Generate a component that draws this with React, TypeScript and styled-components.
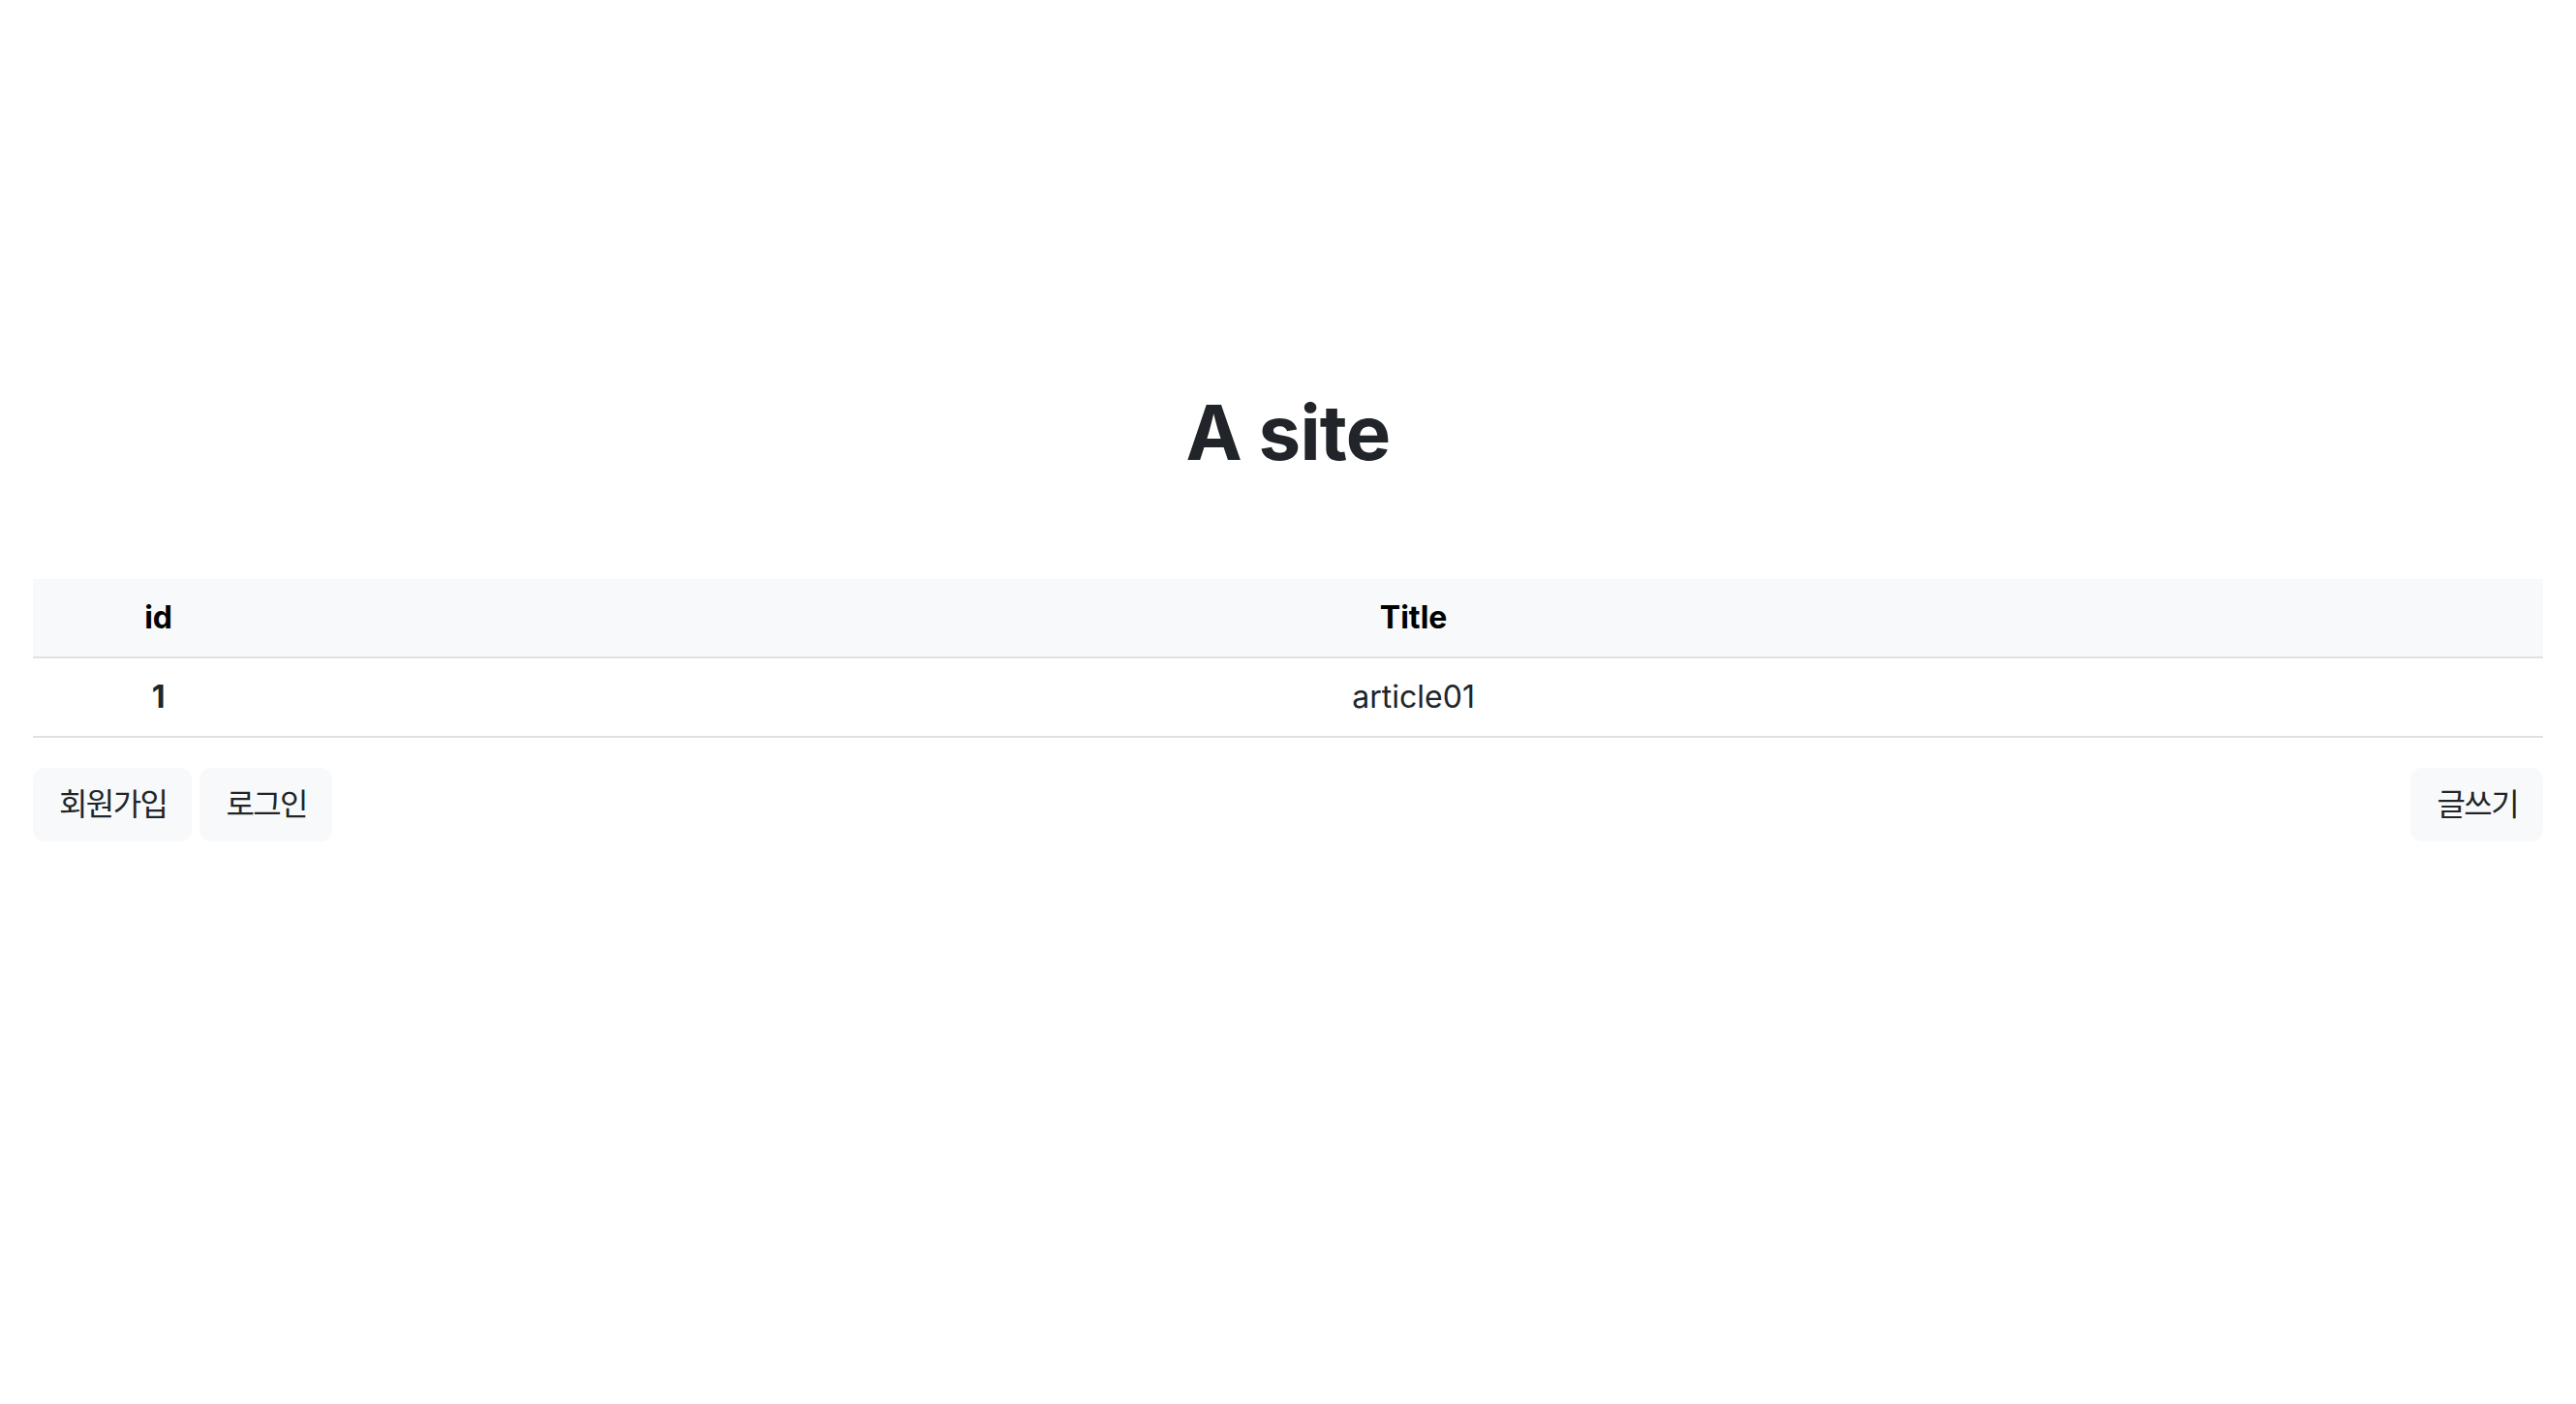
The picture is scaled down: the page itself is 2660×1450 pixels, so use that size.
import React from "react";
import styled, { createGlobalStyle } from "styled-components";

const GlobalStyle = createGlobalStyle`
  html, body {
    margin: 0;
    padding: 0;
    background: #ffffff;
  }
  body {
    font-family: Inter, "Noto Sans CJK KR", "Noto Sans", sans-serif;
    color: #212529;
    font-size: 32px;
    line-height: 1.5;
  }
  * { box-sizing: border-box; }
`;

const Page = styled.main`
  padding: 399px 34px 0;
`;

const Heading = styled.h1`
  margin: 0 0 103px;
  font-size: 78px;
  line-height: 96px;
  font-weight: 700;
  text-align: center;
  color: #212529;
  letter-spacing: -0.8px;
`;

const Table = styled.table`
  width: 100%;
  border-collapse: collapse;
  table-layout: fixed;
  color: #212529;
`;

const HeadCell = styled.th<{ $width?: string }>`
  width: ${(p) => p.$width ?? "auto"};
  background: #f8f9fa;
  color: #000;
  font-weight: 700;
  text-align: center;
  padding: 16px;
  line-height: 48px;
  border-bottom: 2px solid #dee2e6;
`;

const RowHead = styled.th`
  font-weight: 700;
  text-align: center;
  padding: 16px;
  line-height: 48px;
  border-bottom: 2px solid #dee2e6;
`;

const Cell = styled.td`
  text-align: center;
  padding: 16px;
  line-height: 48px;
  border-bottom: 2px solid #dee2e6;
`;

const Actions = styled.div`
  margin-top: 31px;
  display: flex;
  justify-content: space-between;
  align-items: center;
`;

const Group = styled.div`
  display: flex;
  gap: 8px;
`;

const Button = styled.button`
  font-family: Inter, "Noto Sans CJK KR", sans-serif;
  font-size: 32px;
  line-height: 48px;
  letter-spacing: -1.6px;
  padding: 12px 24px 12px 25px;
  background: #f8f9fa;
  border: 2px solid #f8f9fa;
  border-radius: 12px;
  color: #212529;
  cursor: pointer;
`;

export default function App() {
  return (
    <>
      <GlobalStyle />
      <Page>
        <Heading>A site</Heading>
        <Table>
          <thead>
            <tr>
              <HeadCell $width="10%">id</HeadCell>
              <HeadCell>Title</HeadCell>
            </tr>
          </thead>
          <tbody>
            <tr>
              <RowHead>1</RowHead>
              <Cell>article01</Cell>
            </tr>
          </tbody>
        </Table>
        <Actions>
          <Group>
            <Button>회원가입</Button>
            <Button>로그인</Button>
          </Group>
          <Button>글쓰기</Button>
        </Actions>
      </Page>
    </>
  );
}
